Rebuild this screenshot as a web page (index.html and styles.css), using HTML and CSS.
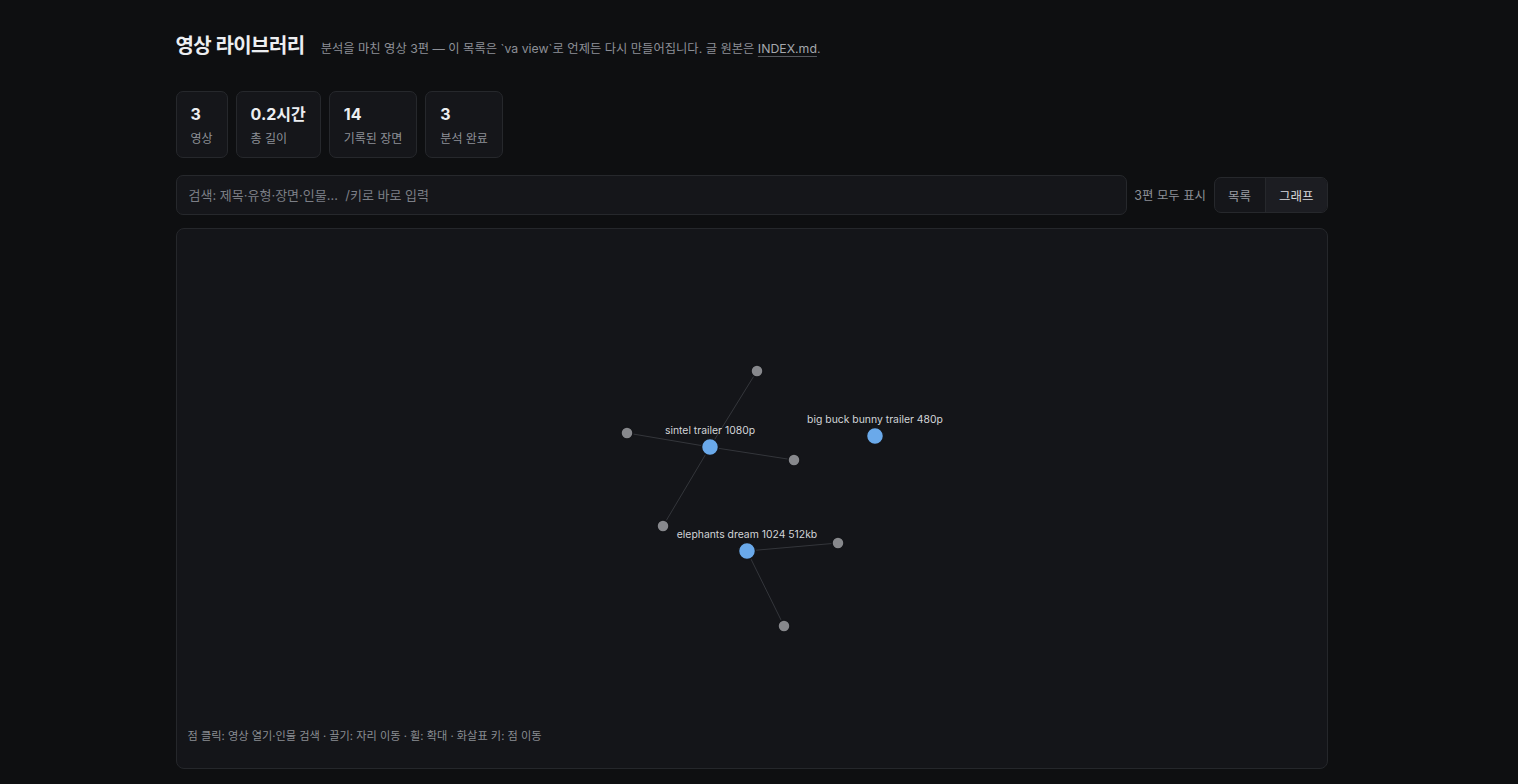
FILE: index.html
```html
<!DOCTYPE html>
<html lang="ko">
<head>
<meta charset="utf-8">
<title>영상 라이브러리</title>
<link rel="stylesheet" href="styles.css">
</head>
<body>
<main class="page">
  <header class="head">
    <h1 class="title">영상 라이브러리</h1>
    <p class="sub">분석을 마친 영상 3편 — 이 목록은 `va view`로 언제든 다시 만들어집니다. 글 원본은 <a class="link" href="#">INDEX.md</a>.</p>
  </header>

  <section class="stats">
    <div class="stat"><div class="num">3</div><div class="lbl">영상</div></div>
    <div class="stat"><div class="num">0.2시간</div><div class="lbl">총 길이</div></div>
    <div class="stat"><div class="num">14</div><div class="lbl">기록된 장면</div></div>
    <div class="stat"><div class="num">3</div><div class="lbl">분석 완료</div></div>
  </section>

  <section class="toolbar">
    <input class="search" type="text" placeholder="검색: 제목·유형·장면·인물…  /키로 바로 입력">
    <span class="count">3편 모두 표시</span>
    <div class="seg">
      <button class="seg-btn">목록</button>
      <button class="seg-btn active">그래프</button>
    </div>
  </section>

  <section class="graph">
    <svg class="canvas" viewBox="0 0 1152 541" width="1152" height="541">
      <g class="edges">
        <line x1="534" y1="219" x2="581" y2="143"/>
        <line x1="534" y1="219" x2="451" y2="205"/>
        <line x1="534" y1="219" x2="618" y2="232"/>
        <line x1="534" y1="219" x2="487" y2="298"/>
        <line x1="571" y1="323" x2="662" y2="315"/>
        <line x1="571" y1="323" x2="608" y2="398"/>
      </g>
      <g class="people">
        <circle cx="581" cy="143" r="6"/>
        <circle cx="451" cy="205" r="6"/>
        <circle cx="618" cy="232" r="6"/>
        <circle cx="487" cy="298" r="6"/>
        <circle cx="662" cy="315" r="6"/>
        <circle cx="608" cy="398" r="6"/>
      </g>
      <g class="videos">
        <circle cx="534" cy="219" r="8.5"/>
        <circle cx="699" cy="208" r="8.5"/>
        <circle cx="571" cy="323" r="8.5"/>
      </g>
      <g class="labels">
        <text x="534" y="206">sintel trailer 1080p</text>
        <text x="699" y="195">big buck bunny trailer 480p</text>
        <text x="571" y="310">elephants dream 1024 512kb</text>
      </g>
    </svg>
    <p class="hint">점 클릭: 영상 열기·인물 검색 · 끌기: 자리 이동 · 휠: 확대 · 화살표 키: 점 이동</p>
  </section>
</main>
</body>
</html>
```

FILE: styles.css
```css
html {
  color-scheme: dark;
  background: #0e0f11;
}

body {
  margin: 0;
  padding-right: 15px;
  background: #0e0f11;
  color: #e6e7ea;
  font-family: "Inter", "Noto Sans CJK KR", sans-serif;
}

.page {
  max-width: 1152px;
  margin: 0 auto;
  padding: 32px 0 70px;
}

.head {
  display: flex;
  align-items: baseline;
  gap: 16px;
  margin-bottom: 31px;
}

.title {
  margin: 0;
  font-size: 20px;
  line-height: 28px;
  font-weight: 700;
  color: #eceef1;
  letter-spacing: -0.55px;
}

.sub {
  margin: 0;
  font-size: 12.3px;
  color: #8d9097;
}

.link {
  color: #a4a7ad;
  text-decoration: underline;
  text-decoration-color: #55585e;
  text-underline-offset: 3px;
}

.stats {
  display: flex;
  gap: 8px;
  margin-bottom: 17px;
}

.stat {
  background: #15161a;
  border: 1px solid #26282c;
  border-radius: 7px;
  padding: 11px 14px 9px;
  height: 67px;
  box-sizing: border-box;
}

.num {
  font-size: 16px;
  line-height: 23px;
  font-weight: 700;
  color: #eceef1;
}

.lbl {
  margin-top: 2px;
  font-size: 12px;
  line-height: 21px;
  color: #8d9097;
}

.toolbar {
  display: flex;
  align-items: center;
  gap: 8px;
  margin-bottom: 13px;
}

.search {
  flex: 1;
  height: 40px;
  box-sizing: border-box;
  background: #15161a;
  border: 1px solid #26282c;
  border-radius: 7px;
  padding: 0 12px;
  font: inherit;
  font-size: 13px;
  color: #e6e7ea;
  outline: none;
}

.search::placeholder {
  color: #7c7f86;
}

.count {
  font-size: 12.4px;
  color: #8d9097;
  margin-left: -1px;
}

.seg {
  display: flex;
  height: 36px;
  box-sizing: border-box;
  border: 1px solid #26282c;
  border-radius: 7px;
  overflow: hidden;
  background: #15161a;
}

.seg-btn {
  background: transparent;
  border: 0;
  padding: 0 13px;
  font: inherit;
  font-size: 12.5px;
  color: #9a9da3;
  cursor: pointer;
}

.seg-btn:first-child {
  padding: 0 14px 0 13px;
}

.seg-btn + .seg-btn {
  border-left: 1px solid #26282c;
}

.seg-btn.active {
  background: #1c1d22;
  color: #d8dade;
}

.graph {
  position: relative;
  height: 541px;
  box-sizing: border-box;
  background: #141519;
  border: 1px solid #25272b;
  border-radius: 8px;
  overflow: hidden;
}

.canvas {
  display: block;
  position: absolute;
  top: -1px;
  left: -1px;
}

.edges line {
  stroke: #34363b;
  stroke-width: 1;
}

.people circle {
  fill: #87888c;
  stroke: #141519;
  stroke-width: 1.5;
}

.videos circle {
  fill: #6aa9ea;
  stroke: #141519;
  stroke-width: 1.5;
}

.labels text {
  fill: #d2d4d8;
  font-size: 10.4px;
  text-anchor: middle;
  font-family: "Inter", "Noto Sans CJK KR", sans-serif;
}

.hint {
  position: absolute;
  left: 11px;
  bottom: 25px;
  margin: 0;
  font-size: 11.2px;
  color: #8a8d93;
}
```
